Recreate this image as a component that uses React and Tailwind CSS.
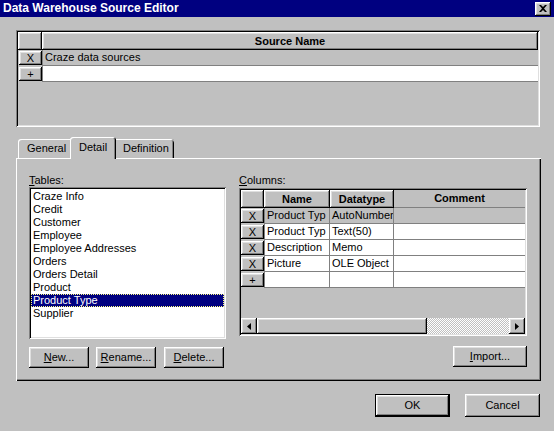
const raised = "shadow-[inset_-1px_-1px_#000,inset_1px_1px_#fff,inset_-2px_-2px_#808080,inset_2px_2px_#dfdfdf]";
const sunken = "shadow-[inset_1px_1px_#808080,inset_-1px_-1px_#fff,inset_2px_2px_#000,inset_-2px_-2px_#dfdfdf]";

function Btn({ children, className = "" }) {
  return (
    <div className={`flex items-center justify-center bg-[#c0c0c0] ${raised} ${className}`}>
      {children}
    </div>
  );
}

function RowHead({ label }) {
  return (
    <div className="w-[24px] h-[16px] pl-[1px] pt-[1px] pb-[1px] border-b border-[#c0c0c0]">
      <Btn className="w-[23px] h-[14px] leading-none">{label}</Btn>
    </div>
  );
}

const tables = [
  "Craze Info",
  "Credit",
  "Customer",
  "Employee",
  "Employee Addresses",
  "Orders",
  "Orders Detail",
  "Product",
  "Product Type",
  "Supplier",
];

const columns = [
  { name: "Product Typ", type: "AutoNumber", current: true },
  { name: "Product Typ", type: "Text(50)" },
  { name: "Description", type: "Memo" },
  { name: "Picture", type: "OLE Object" },
];

function SourceGrid() {
  return (
    <div className={`ml-[16px] mt-[13px] w-[524px] h-[97px] p-[2px] ${sunken}`}>
      <div className="flex h-[18px]">
        <div className={`w-[24px] ${raised}`} />
        <div className={`flex-1 flex items-center justify-center font-bold ${raised}`}>Source Name</div>
      </div>
      <div className="flex h-[16px]">
        <RowHead label="X" />
        <div className="flex-1 bg-[#c0c0c0] border-l border-b border-[#808080] pl-[2px] leading-[15px]">
          Craze data sources
        </div>
      </div>
      <div className="flex h-[16px]">
        <RowHead label="+" />
        <div className="flex-1 bg-white border-l border-b border-[#808080]" />
      </div>
    </div>
  );
}

function Tabs() {
  return (
    <div className="ml-[18px] mt-[10px] h-[22px] -mb-[1px] flex items-end relative z-10">
      <div className="w-[52px] h-[19px] mb-[1px] pl-[9px] pt-[3px] rounded-tl-[3px] shadow-[inset_1px_1px_#fff]">
        General
      </div>
      <div className="w-[46px] h-[22px] pl-[9px] pt-[4px] bg-[#c0c0c0] rounded-t-[3px] shadow-[inset_1px_1px_#fff,inset_-1px_0_#000,inset_-2px_0_#808080]">
        Detail
      </div>
      <div className="w-[58px] h-[19px] mb-[1px] pl-[7px] pt-[3px] rounded-tr-[3px] shadow-[inset_0_1px_#fff,inset_-1px_0_#000,inset_-2px_0_#808080]">
        Definition
      </div>
    </div>
  );
}

function TableList() {
  return (
    <div className={`w-[197px] h-[152px] p-[2px] ${sunken}`}>
      <div className="w-full h-full bg-white pt-[1px]">
        {tables.map((t) =>
          t === "Product Type" ? (
            <div
              key={t}
              className="h-[13px] pl-[2px] bg-[#000080] text-white outline-1 outline-dotted outline-[#ffff80] -outline-offset-1"
            >
              {t}
            </div>
          ) : (
            <div key={t} className="h-[13px] pl-[2px]">
              {t}
            </div>
          )
        )}
      </div>
    </div>
  );
}

function Arrow({ dir }) {
  return (
    <svg width="4" height="7" viewBox="0 0 4 7">
      {dir === "left" ? <path d="M4 0 L0 3.5 L4 7 Z" fill="#000" /> : <path d="M0 0 L4 3.5 L0 7 Z" fill="#000" />}
    </svg>
  );
}

function ColumnGrid() {
  return (
    <div className={`w-[288px] h-[148px] p-[2px] flex flex-col ${sunken}`}>
      <div className="flex h-[18px]">
        <div className={`w-[23px] ${raised}`} />
        <div className={`w-[66px] flex items-center justify-center font-bold ${raised}`}>Name</div>
        <div className={`w-[64px] flex items-center justify-center font-bold ${raised}`}>Datatype</div>
        <div className="flex-1 flex items-center justify-center font-bold border-b border-[#808080]">Comment</div>
      </div>
      {columns.map((c, i) => (
        <div key={i} className={`flex h-[16px] ${c.current ? "bg-[#c0c0c0]" : "bg-white"}`}>
          <div className="w-[23px] h-[16px] bg-[#c0c0c0] pt-[1px] pb-[1px]">
            <Btn className="w-[23px] h-[14px] leading-none">X</Btn>
          </div>
          <div className="w-[66px] border-l border-r border-b border-[#808080] pl-[2px] leading-[15px] overflow-hidden whitespace-nowrap">
            {c.name}
          </div>
          <div className="w-[64px] border-r border-b border-[#808080] pl-[2px] leading-[15px] overflow-hidden whitespace-nowrap">
            {c.type}
          </div>
          <div className="flex-1 border-b border-[#808080]" />
        </div>
      ))}
      <div className="flex h-[16px] bg-white">
        <div className="w-[23px] h-[16px] bg-[#c0c0c0] pt-[1px] pb-[1px]">
          <Btn className="w-[23px] h-[14px] leading-none">+</Btn>
        </div>
        <div className="w-[66px] border-l border-r border-b border-[#808080]" />
        <div className="w-[64px] border-r border-b border-[#808080]" />
        <div className="flex-1 border-b border-[#808080]" />
      </div>
      <div className="flex-1" />
      <div className="flex h-[16px]">
        <Btn className="w-[16px] h-[16px]">
          <Arrow dir="left" />
        </Btn>
        <Btn className="w-[170px] h-[16px]" />
        <div className="flex-1 bg-[image:repeating-conic-gradient(#ffffff_0%_25%,#c0c0c0_0%_50%)] bg-[length:2px_2px]" />
        <Btn className="w-[16px] h-[16px]">
          <Arrow dir="right" />
        </Btn>
      </div>
    </div>
  );
}

export default function App() {
  return (
    <div className="w-[554px] h-[431px] bg-[#c0c0c0] overflow-hidden font-['Liberation_Sans',Arial,sans-serif] text-[11px] leading-[13px] text-black">
      {/* title bar */}
      <div className="h-[17px] bg-[#000080] flex items-center justify-between pl-[3px] pr-[3px]">
        <span className="text-white font-bold text-[12px] leading-[17px]">Data Warehouse Source Editor</span>
        <Btn className="w-[16px] h-[14px]">
          <svg width="8" height="7" viewBox="0 0 8 7">
            <path d="M0 0 H2 L4 2 L6 0 H8 L5 3.5 L8 7 H6 L4 5 L2 7 H0 L3 3.5 Z" fill="#000" />
          </svg>
        </Btn>
      </div>

      <SourceGrid />
      <Tabs />

      {/* tab panel */}
      <div className="ml-[16px] w-[525px] h-[223px] pt-[16px] pl-[13px] flex gap-[13px] shadow-[inset_1px_1px_#fff,inset_-1px_-1px_#000,inset_-2px_-2px_#808080]">
        <div className="flex flex-col w-[197px]">
          <div className="h-[13px]">
            <span className="underline">T</span>ables:
          </div>
          <TableList />
          <div className="flex mt-[8px]">
            <Btn className="w-[60px] h-[21px]">
              <span>
                <span className="underline">N</span>ew...
              </span>
            </Btn>
            <Btn className="w-[60px] h-[21px] ml-[7px]">
              <span>
                <span className="underline">R</span>ename...
              </span>
            </Btn>
            <Btn className="w-[60px] h-[21px] ml-[8px]">
              <span>
                <span className="underline">D</span>elete...
              </span>
            </Btn>
          </div>
        </div>
        <div className="flex flex-col w-[288px]">
          <div className="h-[14px]">
            <span className="underline">C</span>olumns:
          </div>
          <ColumnGrid />
          <Btn className="w-[74px] h-[21px] mt-[10px] self-end">
            <span>
              <span className="underline">I</span>mport...
            </span>
          </Btn>
        </div>
      </div>

      {/* dialog buttons */}
      <div className="flex justify-end gap-[15px] pr-[14px] mt-[13px]">
        <div className="w-[75px] h-[23px] border border-black">
          <Btn className="w-full h-full">OK</Btn>
        </div>
        <Btn className="w-[75px] h-[23px]">Cancel</Btn>
      </div>
    </div>
  );
}
